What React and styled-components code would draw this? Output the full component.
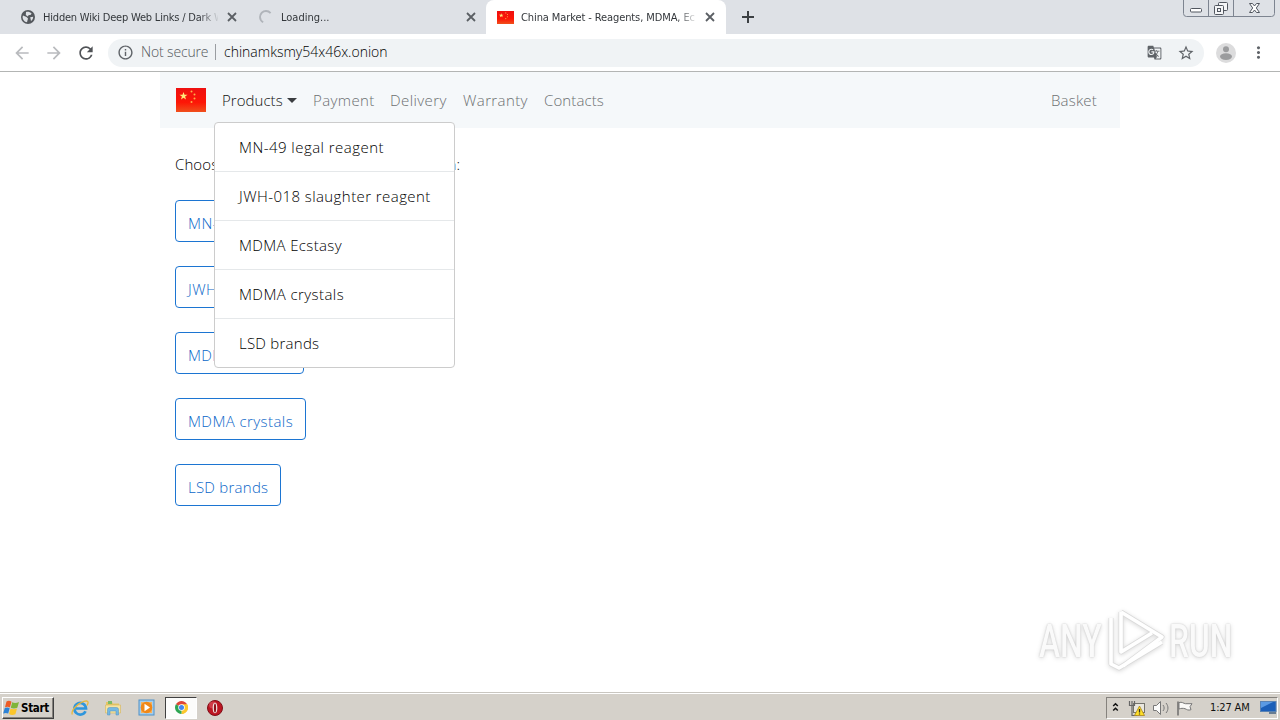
import React, { useState } from 'react';
import styled, { createGlobalStyle } from 'styled-components';
import {
  MdArrowBack,
  MdArrowForward,
  MdRefresh,
  MdInfoOutline,
  MdGTranslate,
  MdStarBorder,
  MdMoreVert
} from 'react-icons/md';

const products = [
  { name: 'MN-49 legal reagent', button: 169, spacing: 0.46 },
  { name: 'JWH-018 slaughter reagent', button: 216, spacing: 0.43 },
  { name: 'MDMA Ecstasy', button: 129, spacing: 0.36 },
  { name: 'MDMA crystals', button: 131, spacing: 0.42 },
  { name: 'LSD brands', button: 106, spacing: 0.25 }
];

const navLinks = [
  { name: 'Payment', width: 77, spacing: 0.4 },
  { name: 'Delivery', width: 73, spacing: 0.4 },
  { name: 'Warranty', width: 81, spacing: 0.4 },
  { name: 'Contacts', width: 76, spacing: 0.1 }
];

const Flag = ({ width, height }) => (
  <svg width={width} height={height} viewBox="0 0 30 24" preserveAspectRatio="none">
    <defs>
      <linearGradient id="flagRed" x1="0" y1="0" x2="0" y2="1">
        <stop offset="0" stopColor="#ee1010" />
        <stop offset="0.6" stopColor="#fd1606" />
        <stop offset="1" stopColor="#f0501c" />
      </linearGradient>
    </defs>
    <rect width="30" height="24" fill="url(#flagRed)" />
    <path d="M7.5 4l1 2.8h3l-2.4 1.8.9 2.9-2.5-1.8L5 11.5l.9-2.9L3.5 6.8h3z" fill="#ffe97a" />
    <g fill="#ffb04a">
      <circle cx="15.5" cy="3.5" r="1" />
      <circle cx="18.5" cy="6.5" r="1" />
      <circle cx="18.5" cy="10.5" r="1" />
      <circle cx="15.5" cy="14" r="1" />
    </g>
  </svg>
);

const Globe = () => (
  <svg width="14" height="14" viewBox="0 0 14 14">
    <circle cx="7" cy="7" r="7" fill="#54585d" />
    <path d="M2 5.5l3.500 1.500 1.500 1.500-1 3.800C3.500 12 1.600 9.500 1.600 7z" fill="#dee1e6" />
    <path d="M5 1.900c2-.5 4.200 0 5.600 1.500L9.500 5H7.800L6.700 6.500 4.800 5z" fill="#dee1e6" />
    <path d="M9.200 7.200l3-.5c0 1.800-.9 3.400-2.200 4.300z" fill="#dee1e6" />
  </svg>
);

const Spinner = () => (
  <svg width="14" height="14" viewBox="0 0 14 14" fill="none">
    <path d="M4.2 12.2A6 6 0 0 1 1 7a6 6 0 0 1 6-6 6 6 0 0 1 4.6 2.1" stroke="#b0b4ba" strokeWidth="1.8" />
  </svg>
);

const CloseIcon = () => (
  <svg width="14" height="14" viewBox="0 0 14 14" fill="none">
    <path d="M3 3l8 8M11 3l-8 8" stroke="#5b5f64" strokeWidth="1.800" />
  </svg>
);

const PlusIcon = () => (
  <svg width="18" height="18" viewBox="0 0 18 18" fill="none">
    <path d="M9 3v12M3 9h12" stroke="#3c4043" strokeWidth="2" />
  </svg>
);

const Avatar = () => (
  <svg width="20" height="20" viewBox="0 0 20 20">
    <circle cx="10" cy="10" r="10" fill="#dcdcdd" />
    <circle cx="10" cy="6.3" r="3" fill="#9b9c9e" />
    <ellipse cx="10" cy="13.6" rx="6" ry="3.3" fill="#9b9c9e" />
  </svg>
);

const WindowButtons = () => (
  <svg width="94" height="18" viewBox="0 0 94 18" fill="none">
    <path d="M1.500 0v13.500a3 3 0 0 0 3 3h85a3 3 0 0 0 3-3V0M26.500 0v16M51.500 0v16" stroke="#7d8490" />
    <rect x="8.500" y="8.500" width="11" height="3.500" rx="1" fill="#fff" stroke="#51565f" />
    <rect x="36.500" y="2.500" width="9" height="8" rx="1" fill="#f4f5f7" stroke="#51565f" />
    <rect x="32.500" y="5.500" width="9" height="9" rx="1" fill="#f4f5f7" stroke="#51565f" />
    <rect x="35.500" y="8.500" width="3" height="3" stroke="#51565f" />
    <path d="M67.500 3.500h3l2 2.500 2-2.500h3l-3.200 4.500 3.200 4.500h-3l-2-2.500-2 2.500h-3l3.200-4.500z" fill="#fff" stroke="#51565f" />
  </svg>
);

const WindowsLogo = () => (
  <svg width="17" height="16" viewBox="0 0 17 16">
    <path d="M3.500 1.500C5 .5 6.900.500 8.500 1.700L6.900 7.400C5.300 6.500 3.700 6.500 2 7.300z" fill="#ec5b26" />
    <path d="M9.200 2.200C11 3.300 13.500 3.200 16 2L14.300 7.800C11.800 8.800 9.600 8.700 7.800 7.700z" fill="#7fb539" />
    <path d="M1.800 8C3.400 7.200 5.200 7.200 6.700 8.200L5.200 13.500C3.600 12.700 2 12.700.2 13.500z" fill="#2c82d6" />
    <path d="M7.600 8.500C9.400 9.500 11.700 9.500 14 8.500L12.400 14.200C10 15.200 8 15.100 6 14z" fill="#fbc62c" />
  </svg>
);

const ExplorerLogo = () => (
  <svg width="18" height="18" viewBox="0 0 18 18" fill="none">
    <path d="M14.500 12.200A5.800 5.800 0 1 1 15 9.500H5" stroke="#2f96dc" strokeWidth="2.700" />
    <path d="M1.300 15.500C-.500 11 8.500 2.500 15.500 1.800c2.500.200 1.500 3.200.500 4.700" stroke="#e9b83a" strokeWidth="1.300" />
  </svg>
);

const FolderLogo = () => (
  <svg width="18" height="18" viewBox="0 0 18 18">
    <path d="M2 3h6l1 1.500h6V13H2z" fill="#e6c566" />
    <path d="M4 2h4v3H4z" fill="#7dbb65" />
    <path d="M1.500 6h15v8h-15z" fill="#f6e3a0" stroke="#d5b65c" strokeWidth=".6" />
    <path d="M3.500 16v-5.500a2 2 0 0 1 2-2h7a2 2 0 0 1 2 2V16H12v-4H6v4z" fill="#75b8e2" stroke="#4e93c3" strokeWidth=".5" />
  </svg>
);

const MediaLogo = () => (
  <svg width="17" height="17" viewBox="0 0 17 17">
    <rect x="1" y="1" width="15" height="15" fill="#a4cdec" stroke="#4f91c8" />
    <rect x="3" y="3" width="11" height="11" fill="#f6b25c" />
    <circle cx="8.500" cy="8.500" r="5.800" fill="#f08819" />
    <path d="M6.500 4.800v7.400l5.500-3.700z" fill="#fff" />
  </svg>
);

const ChromeLogo = () => (
  <svg width="13" height="13" viewBox="0 0 16 16">
    <path d="M8 8L1.100 4A8 8 0 0 1 14.900 4z" fill="#df4637" />
    <path d="M8 8l6.900-4A8 8 0 0 1 8 16z" fill="#fbc72d" />
    <path d="M8 8v8A8 8 0 0 1 1.100 4z" fill="#2da552" />
    <path d="M8 4h6.900a8 8 0 0 1-6.900 12l3.500-6z" fill="#fbc72d" />
    <circle cx="8" cy="8" r="4" fill="#fff" />
    <circle cx="8" cy="8" r="3.100" fill="#4486ee" />
  </svg>
);

const OperaLogo = () => (
  <svg width="16" height="16" viewBox="0 0 16 16">
    <circle cx="8" cy="8" r="7.500" fill="#bd1522" stroke="#7f0f18" />
    <ellipse cx="6" cy="5" rx="4" ry="3.500" fill="#dc5560" opacity=".6" />
    <ellipse cx="8" cy="8" rx="2.300" ry="5.200" fill="#f1e3e1" />
    <ellipse cx="8" cy="8" rx="1.100" ry="4.500" fill="#8b0f18" />
  </svg>
);

const TrayIcons = () => (
  <svg width="84" height="18" viewBox="0 0 84 18" fill="none">
    <path d="M2.200 7l2.300-2.300L6.800 7M2.200 11.500l2.300-2.300 2.300 2.300" stroke="#111" strokeWidth="1.500" />
    <rect x="22.500" y="4.500" width="11" height="9" fill="#e9e7df" stroke="#74736c" />
    <path d="M18.500 2v4.500h5V2M21 2v14.500h5" stroke="#666" strokeWidth="1.200" />
    <path d="M28.500 7l5 9.500h-10z" fill="#ffdf28" stroke="#a8841b" strokeWidth=".8" />
    <path d="M28.500 10v3.500M28.500 14.500v1" stroke="#332" strokeWidth="1.300" />
    <path d="M42.500 6.500h3l4-4v13l-4-4h-3z" fill="#fbfbfa" stroke="#777" />
    <path d="M52 6c1.500 2 1.500 4 0 6M55 4c2.600 3.200 2.600 7 0 10" stroke="#777" />
    <path d="M67 2.500v14" stroke="#666" strokeWidth="1.400" />
    <path d="M68 3.500c3-1 4.500 1 6.500 1.200h6.500l-2 3 1 3c-3 1-4-.2-6-1-2-.6-4-.5-6 .3z" fill="#faf9f7" stroke="#777" />
  </svg>
);

const DesktopIcon = () => (
  <svg width="17" height="15" viewBox="0 0 17 15">
    <rect x=".5" y="1.500" width="15.500" height="10" fill="#1c5fb8" stroke="#5a83b4" />
    <path d="M1 8L13 2H1z" fill="#5b9ae3" />
    <path d="M9 13h7" stroke="#45617f" strokeWidth="1.500" />
  </svg>
);

const PlayLogo = () => (
  <svg width="60" height="66" viewBox="0 0 60 66" fill="none">
    <g stroke="#dadada" strokeWidth="5" strokeLinejoin="round">
      <path d="M14 4L55 29 16 58M14 4v40L45 25M4 10v46l8 4L55 34" />
    </g>
    <g stroke="#fff" strokeWidth="3.600" strokeLinejoin="round">
      <path d="M14 4L55 29 16 58M14 4v40L45 25M4 10v46l8 4L55 34" />
    </g>
  </svg>
);

const App = () => {
  const [open, setOpen] = useState(true);

  return (
    <Screen>
      <GlobalStyle />
      <TabStrip>
        <Tab $width={247} $pad={21}>
          <Globe />
          <TabTitle $gap={8} $spacing={-0.2}>Hidden Wiki Deep Web Links / Dark W</TabTitle>
          <CloseIcon />
        </Tab>
        <Tab $width={239} $pad={12}>
          <Spinner />
          <TabTitle $gap={8}>Loading...</TabTitle>
          <CloseIcon />
        </Tab>
        <Tab $width={240} $pad={11} $active>
          <Flag width={17} height={13} />
          <TabTitle $gap={7} $spacing={-0.1}>China Market - Reagents, MDMA, Ec</TabTitle>
          <CloseIcon />
        </Tab>
        <NewTab><PlusIcon /></NewTab>
        <WindowButtons />
      </TabStrip>
      <Toolbar>
        <ToolIcon $faded><MdArrowBack size={20} /></ToolIcon>
        <ToolIcon $faded><MdArrowForward size={20} /></ToolIcon>
        <ToolIcon><MdRefresh size={20} /></ToolIcon>
        <AddressBar>
          <MdInfoOutline size={17} />
          <Security>Not secure</Security>
          <Url>chinamksmy54x46x.onion</Url>
          <AddressActions>
            <MdGTranslate size={15} />
            <MdStarBorder size={18} />
          </AddressActions>
        </AddressBar>
        <Avatar />
        <MdMoreVert size={19} />
      </Toolbar>
      <Page>
        <Container>
          <Navbar>
            <Flag width={30} height={24} />
            <Dropdown>
              <Toggle onClick={() => setOpen(!open)}>Products</Toggle>
              {open && (
                <Menu>
                  {products.map((item) => (
                    <MenuItem key={item.name} $spacing={item.spacing}>{item.name}</MenuItem>
                  ))}
                </Menu>
              )}
            </Dropdown>
            {navLinks.map((link) => (
              <NavLink key={link.name} $width={link.width} $spacing={link.spacing}>{link.name}</NavLink>
            ))}
            <Basket>Basket</Basket>
          </Navbar>
          <Content>
            <Intro>Choose the product you are interested in:</Intro>
            {products.map((item) => (
              <ProductButton key={item.name} $width={item.button} $spacing={item.spacing}>{item.name}</ProductButton>
            ))}
          </Content>
        </Container>
        <Watermark>
          <WatermarkText><span>ANY</span></WatermarkText>
          <PlayLogo />
          <WatermarkText><span>RUN</span></WatermarkText>
        </Watermark>
      </Page>
      <Taskbar>
        <StartButton><WindowsLogo />Start</StartButton>
        <TaskItem><ExplorerLogo /></TaskItem>
        <TaskItem><FolderLogo /></TaskItem>
        <TaskItem><MediaLogo /></TaskItem>
        <TaskItem $active><ChromeLogo /></TaskItem>
        <TaskItem><OperaLogo /></TaskItem>
        <Tray>
          <TrayIcons />
          <Clock>1:27 AM</Clock>
          <DesktopIcon />
        </Tray>
      </Taskbar>
    </Screen>
  );
};

export default App;

const GlobalStyle = createGlobalStyle`
  * {
    box-sizing: border-box;
  }
  body {
    margin: 0;
    overflow: hidden;
  }
  svg {
    flex-shrink: 0;
  }
  button {
    font: inherit;
  }
`;

const Screen = styled.div`
  display: flex;
  flex-direction: column;
  width: 1280px;
  height: 720px;
  overflow: hidden;
  background: #fff;
  font-family: 'Open Sans', 'Noto Sans', sans-serif;
  font-weight: 300;
`;

const TabStrip = styled.div`
  display: flex;
  height: 34px;
  background: #dee1e6;
  & > svg {
    margin-left: auto;
    margin-right: 4px;
  }
`;

const Tab = styled.div`
  display: flex;
  align-items: center;
  width: ${props => props.$width}px;
  padding: 0 ${props => (props.$active ? 9 : 8)}px 0 ${props => props.$pad}px;
  border-radius: ${props => (props.$active ? '8px 8px 0 0' : '0')};
  background: ${props => (props.$active ? '#fff' : 'transparent')};
`;

const TabTitle = styled.span`
  flex: 1;
  margin: 0 7px 0 ${props => props.$gap}px;
  overflow: hidden;
  white-space: nowrap;
  color: #33373b;
  font-family: 'DejaVu Sans Condensed', 'DejaVu Sans', sans-serif;
  font-stretch: condensed;
  font-weight: 400;
  font-size: 11px;
  letter-spacing: ${props => props.$spacing || 0}px;
  mask-image: linear-gradient(90deg, #000 89%, transparent 101%);
`;

const NewTab = styled.div`
  display: flex;
  align-items: center;
  margin-left: 13px;
`;

const Toolbar = styled.div`
  display: flex;
  align-items: center;
  height: 38px;
  padding: 0 12px;
  border-bottom: 1px solid #b3b5b4;
  background: #fff;
  color: #5f6368;
  & > svg:last-child {
    margin-left: 13px;
  }
`;

const ToolIcon = styled.div`
  display: flex;
  width: 32px;
  color: ${props => (props.$faded ? '#b9bbbe' : '#505357')};
`;

const AddressBar = styled.div`
  display: flex;
  align-items: center;
  width: 1096px;
  height: 28px;
  margin-right: 12px;
  padding: 0 9px 2px;
  border-radius: 14px;
  background: #f0f3f5;
  font-size: 14px;
  svg {
    margin-top: 2px;
  }
`;

const Security = styled.span`
  width: 75px;
  height: 16px;
  margin-left: 7px;
  border-right: 1px solid #9a9da1;
  line-height: 16px;
  letter-spacing: -0.15px;
  white-space: nowrap;
  color: #54585c;
`;

const Url = styled.span`
  margin-left: 8px;
  color: #000;
`;

const AddressActions = styled.div`
  display: flex;
  align-items: center;
  gap: 15px;
  margin-left: auto;
`;

const Page = styled.main`
  position: relative;
  height: 620px;
`;

const Container = styled.div`
  width: 960px;
  margin: 0 auto;
  font-size: 15px;
`;

const Navbar = styled.nav`
  display: flex;
  align-items: center;
  height: 56px;
  padding: 0 16px;
  background: #f5f8fa;
`;

const Dropdown = styled.div`
  position: relative;
  width: 91px;
  margin-left: 16px;
`;

const Toggle = styled.div`
  display: flex;
  align-items: center;
  line-height: 24px;
  letter-spacing: 0.05px;
  color: #111;
  cursor: pointer;
  &::after {
    content: '';
    margin-left: 4px;
    border-top: 5px solid #3a3d40;
    border-left: 5px solid transparent;
    border-right: 5px solid transparent;
  }
`;

const Menu = styled.ul`
  position: absolute;
  top: 34px;
  left: -8px;
  z-index: 10;
  width: 241px;
  margin: 0;
  padding: 0;
  list-style: none;
  border: 1px solid #ccc;
  border-radius: 4px;
  background: #fff;
`;

const MenuItem = styled.li`
  height: 49px;
  padding-left: 24px;
  border-bottom: 1px solid #e5e8ea;
  line-height: 49px;
  white-space: nowrap;
  color: #000;
  letter-spacing: ${props => props.$spacing}px;
  &:last-child {
    height: 48px;
    border-bottom: 0;
  }
`;

const NavLink = styled.span`
  width: ${props => props.$width}px;
  color: #6c6f71;
  letter-spacing: ${props => props.$spacing}px;
`;

const Basket = styled.span`
  margin-left: auto;
  margin-right: 7px;
  color: #6c6f71;
  letter-spacing: 0.2px;
`;

const Content = styled.section`
  display: flex;
  flex-direction: column;
  align-items: flex-start;
  padding: 24px 15px 0;
`;

const Intro = styled.p`
  height: 24px;
  margin: 0 0 24px;
  line-height: 24px;
  letter-spacing: 0.1px;
  white-space: nowrap;
  color: #000;
`;

const ProductButton = styled.button`
  width: ${props => props.$width}px;
  height: 42px;
  margin-bottom: 24px;
  padding: 3px 0 0 12px;
  border: 1px solid #1c75d2;
  border-radius: 4px;
  background: #fff;
  color: #0a66c8;
  text-align: left;
  white-space: nowrap;
  letter-spacing: ${props => props.$spacing}px;
`;

/* translucent logo laid over the page corner */
const Watermark = styled.div`
  position: absolute;
  right: 45px;
  bottom: 18px;
  display: flex;
  align-items: center;
  gap: 2px;
  filter: drop-shadow(0 1px 2px rgba(0, 0, 0, 0.15));
`;

const WatermarkText = styled.div`
  width: 66px;
  font-family: Roboto, sans-serif;
  font-size: 46px;
  font-weight: 500;
  color: #fafafa;
  span {
    display: inline-block;
    transform: scaleX(0.69);
    transform-origin: left;
    text-shadow: 0 0 2px #c2c2c2;
  }
`;

const Taskbar = styled.footer`
  display: flex;
  align-items: center;
  height: 28px;
  padding: 2px 2px 0;
  border-top: 1px solid #c9c6c0;
  background: #d5d1ca;
  box-shadow: inset 0 1px #fff;
`;

const StartButton = styled.div`
  display: flex;
  align-items: center;
  gap: 1px;
  width: 52px;
  height: 22px;
  margin-right: 12px;
  border: 1px solid;
  border-color: #fff #404040 #404040 #fff;
  box-shadow: inset -1px -1px #85827d;
  font-family: 'DejaVu Sans Condensed', 'DejaVu Sans', sans-serif;
  font-stretch: condensed;
  font-size: 11.5px;
  font-weight: 700;
  letter-spacing: -0.3px;
  color: #000;
`;

const TaskItem = styled.div`
  display: flex;
  align-items: center;
  justify-content: center;
  width: ${props => (props.$active ? 32 : 28)}px;
  height: 22px;
  margin-right: ${props => (props.$active ? 4 : 5)}px;
  border: ${props => (props.$active ? '1px solid' : '0')};
  border-color: #404040 #fff #fff #404040;
  background: ${props => (props.$active ? '#fcfcfb' : 'transparent')};
`;

const Tray = styled.div`
  display: flex;
  align-items: center;
  width: 172px;
  height: 22px;
  margin-left: auto;
  padding-left: 4px;
  border: 1px solid;
  border-color: #85827d #fff #fff #85827d;
`;

const Clock = styled.span`
  width: 50px;
  margin-left: 15px;
  font-family: 'DejaVu Sans Condensed', 'DejaVu Sans', sans-serif;
  font-stretch: condensed;
  font-size: 11px;
  font-weight: 400;
  letter-spacing: -0.15px;
  white-space: nowrap;
  color: #111;
`;
